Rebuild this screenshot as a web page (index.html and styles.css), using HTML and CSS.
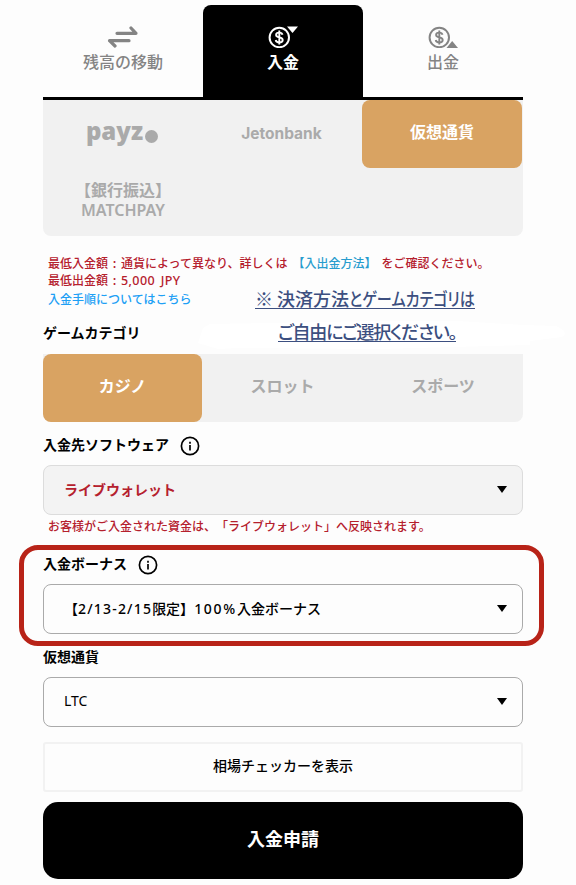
FILE: index.html
```html
<!DOCTYPE html>
<html lang="ja">
<head>
<meta charset="utf-8">
<title>入金</title>
<link rel="stylesheet" href="styles.css">
</head>
<body>
<main class="page">
  <nav class="tabs">
    <div class="tab">
      <svg class="tab-icon" width="32" height="24" viewBox="0 0 32 24" fill="none" stroke="currentColor" stroke-width="3.200" stroke-linecap="round" stroke-linejoin="round"><path d="M10 9.300H29L24 4M22 16.700H2.500L8 22"/></svg>
      <span>残高の移動</span>
    </div>
    <div class="tab tab-active">
      <svg class="tab-icon" width="32" height="24" viewBox="0 0 32 24"><circle cx="12.300" cy="13.500" r="9.700" fill="none" stroke="currentColor" stroke-width="2"/><path d="M15.500 10.800c-.3-1.500-1.500-2.200-3.200-2.200-2 0-3.200.9-3.200 2.300 0 3.400 6.600 1.600 6.600 5 0 1.500-1.400 2.500-3.400 2.500S9 17.500 8.700 16M12.300 6.600v13.800" fill="none" stroke="currentColor" stroke-width="1.900"/><path d="M18 1h13l-6.500 9z" fill="#000"/><path d="M20 2.500h11L25.500 9z" fill="currentColor"/></svg>
      <span>入金</span>
    </div>
    <div class="tab">
      <svg class="tab-icon" width="32" height="24" viewBox="0 0 32 24"><circle cx="12.300" cy="13.500" r="9.700" fill="none" stroke="currentColor" stroke-width="2"/><path d="M15.500 10.800c-.3-1.500-1.500-2.200-3.200-2.200-2 0-3.200.9-3.200 2.300 0 3.400 6.600 1.600 6.600 5 0 1.500-1.400 2.500-3.400 2.500S9 17.500 8.700 16M12.300 6.600v13.800" fill="none" stroke="currentColor" stroke-width="1.900"/><path d="M17.500 26l8-11 8 11z" fill="#fdfdfd"/><path d="M19.500 24l5.700-7 5.800 7z" fill="currentColor"/></svg>
      <span>出金</span>
    </div>
  </nav>

  <section class="methods">
    <div class="method payz"><span>payz</span><i class="payz-dot"></i></div>
    <div class="method jeton">Jetonbank</div>
    <div class="method selected">仮想通貨</div>
    <div class="method matchpay"><span>【銀行振込】</span><span class="latin">MATCHPAY</span></div>
  </section>

  <section class="notices">
    <p>最低入金額 : 通貨によって異なり、詳しくは<a class="methods-link">【入出金方法】</a>をご確認ください。</p>
    <p>最低出金額 : <span class="amount">5,000 JPY</span></p>
    <p class="guide"><a>入金手順についてはこちら</a></p>
    <div class="callout">
      <svg class="callout-bg" width="370" height="30" viewBox="0 0 370 30"><path d="M5 7L12 3 180 0H260L325 4 358 5Q372 11 364 16L332 20V24L180 28 40 27 20 28 0 22Z" fill="#fff"/></svg>
      <span class="callout-line first">※ 決済方法<span class="narrow">とゲームカテゴリは</span></span>
      <span class="callout-line second">ご自由にご選択ください。</span>
    </div>
  </section>

  <h2 class="label category-label">ゲームカテゴリ</h2>
  <section class="categories">
    <div class="category selected">カジノ</div>
    <div class="category">スロット</div>
    <div class="category">スポーツ</div>
  </section>

  <h2 class="label software-label">入金先ソフトウェア
    <svg class="info" width="20" height="20" viewBox="0 0 20 20" fill="none" stroke="#000" stroke-width="1.700"><circle cx="10" cy="10" r="8.600"/><path d="M10 9v5.500M10 5.800v1.900"/></svg>
  </h2>
  <div class="select locked"><span>ライブウォレット</span><i class="caret"></i></div>
  <p class="hint">お客様がご入金された資金は、「ライブウォレット」へ反映されます。</p>

  <section class="bonus">
    <h2 class="label">入金ボーナス
      <svg class="info" width="20" height="20" viewBox="0 0 20 20" fill="none" stroke="#000" stroke-width="1.700"><circle cx="10" cy="10" r="8.600"/><path d="M10 9v5.500M10 5.800v1.900"/></svg>
    </h2>
    <div class="select"><span class="bonus-value">【<span class="dates">2/13-2/15</span>限定】<span class="percent">100%</span>入金ボーナス</span><i class="caret"></i></div>
  </section>

  <h2 class="label currency-label">仮想通貨</h2>
  <div class="select"><span class="ltc">LTC</span><i class="caret"></i></div>
  <div class="checker">相場チェッカーを表示</div>
  <div class="submit">入金申請</div>
</main>
</body>
</html>
```
FILE: styles.css
```css
* { box-sizing: border-box; }
body {
  margin: 0;
  background: #fdfdfd;
  color: #000;
  font-family: "Noto Sans CJK JP", sans-serif;
  text-spacing-trim: space-all;
}
h2, p { margin: 0; }
.page {
  width: 480px;
  height: 885px;
  margin-left: 43px;
  padding-top: 5px;
}
.tabs {
  display: grid;
  grid-template-columns: repeat(3, 160px);
  height: 95px;
  border-bottom: 3px solid #000;
}
.tab {
  display: flex;
  flex-direction: column;
  align-items: center;
  padding-top: 19px;
  color: #848484;
  font-size: 16px;
  font-weight: 500;
  line-height: 24px;
}
.tab span { margin-top: 1px; }
.tab-active {
  background: #000;
  color: #fff;
  font-weight: 700;
  border-radius: 8px 8px 0 0;
}
.methods {
  display: grid;
  grid-template-columns: 160px 159px 160px;
  grid-template-rows: 68px 68px;
  background: #f1f1f1;
  border-radius: 0 0 8px 8px;
}
.method, .category {
  display: flex;
  align-items: center;
  justify-content: center;
  color: #aaa;
  font-size: 16px;
  font-weight: 700;
  line-height: 20px;
  padding-bottom: 6px;
}
.method.selected, .category.selected {
  background: #d9a362;
  color: #fff;
  border-radius: 8px;
}
.payz {
  font: 800 24px/24px "Open Sans", sans-serif;
  padding: 0 2px 6px 0;
}
.payz-dot {
  width: 13px;
  height: 13px;
  margin: 11px 0 0 2px;
  border-radius: 50%;
  background: #aaa;
}
.jeton {
  font: 700 15.5px/20px Inter, sans-serif;
  padding: 0 2px 0 0;
}
.matchpay { flex-direction: column; gap: 1px; padding: 0 0 6px; }
.latin {
  font-family: "Noto Sans", sans-serif;
  font-weight: 600;
  line-height: 20px;
}
.notices {
  position: relative;
  height: 87px;
  padding: 18px 0 0 5px;
  color: #b5202d;
  font-size: 12px;
  font-weight: 500;
  line-height: 17px;
  white-space: nowrap;
  word-spacing: 2px;
}
.methods-link { color: #279cce; margin: 0 5px; }
.amount {
  font-family: "Noto Sans", sans-serif;
  font-size: 12.5px;
  line-height: 1;
  letter-spacing: .4px;
}
.guide { color: #20a0f5; line-height: 21px; }
.callout { position: absolute; left: 0; top: 0; color: #3c4f80; word-spacing: 0; }
.callout-bg { position: absolute; left: 155px; top: 85px; }
.callout-line {
  position: absolute;
  font-size: 18px;
  line-height: 20px;
  height: 21px;
  font-feature-settings: "palt";
  border-bottom: 1px solid #3c4f80;
}
.first { left: 212px; top: 52px; width: 220px; }
.narrow {
  display: inline-block;
  transform: scaleX(.84);
  transform-origin: left;
}
.second { left: 235px; top: 85px; width: 178px; letter-spacing: -1.25px; }
.label {
  display: flex;
  align-items: center;
  height: 20px;
  padding-bottom: 2px;
  font-size: 14px;
  font-weight: 700;
  line-height: 18px;
}
.categories {
  display: grid;
  grid-template-columns: 159px 161px 160px;
  height: 68px;
  margin-top: 11px;
  background: #f1f1f1;
  border-radius: 0 0 8px 8px;
}
.software-label { margin: 13px 0 10px; }
.info { margin: 4px 0 0 11px; }
.select {
  display: flex;
  align-items: center;
  justify-content: space-between;
  height: 50px;
  padding: 0 15px 1px 20px;
  border: 1px solid #aaa;
  border-radius: 8px;
  font-size: 14px;
  font-weight: 500;
}
.select > span { margin-top: -2px; }
.dates, .percent, .ltc { font-family: "Noto Sans", sans-serif; line-height: 1; }
.dates { letter-spacing: 1.2px; }
.percent { letter-spacing: 1.7px; }
.ltc { font-weight: 400; }
.locked { background: #f3f3f3; border-color: #dcdcdc; color: #b5202d; font-weight: 700; }
.caret {
  width: 10px;
  height: 7px;
  background: #000;
  clip-path: polygon(0 0, 100% 0, 50% 100%);
}
.hint {
  height: 30px;
  padding-left: 5px;
  color: #b5202d;
  font-size: 12px;
  font-weight: 500;
  line-height: 22px;
}
.bonus {
  width: 525px;
  height: 101px;
  margin-left: -24px;
  padding: 4px 16px 0 19px;
  border: 5px solid #b82318;
  border-radius: 19px;
}
.bonus .select { margin-top: 10px; }
.currency-label { margin: 1px 0 10px; }
.checker {
  display: flex;
  align-items: center;
  justify-content: center;
  height: 50px;
  margin-top: 15px;
  padding-bottom: 4px;
  border: 2px solid #f2f2f2;
  border-radius: 3px;
  font-size: 14px;
  font-weight: 500;
}
.submit {
  display: flex;
  align-items: center;
  justify-content: center;
  height: 77px;
  margin-top: 10px;
  padding-bottom: 6px;
  border-radius: 15px;
  background: #000;
  color: #fff;
  font-size: 18px;
  font-weight: 700;
}
```
